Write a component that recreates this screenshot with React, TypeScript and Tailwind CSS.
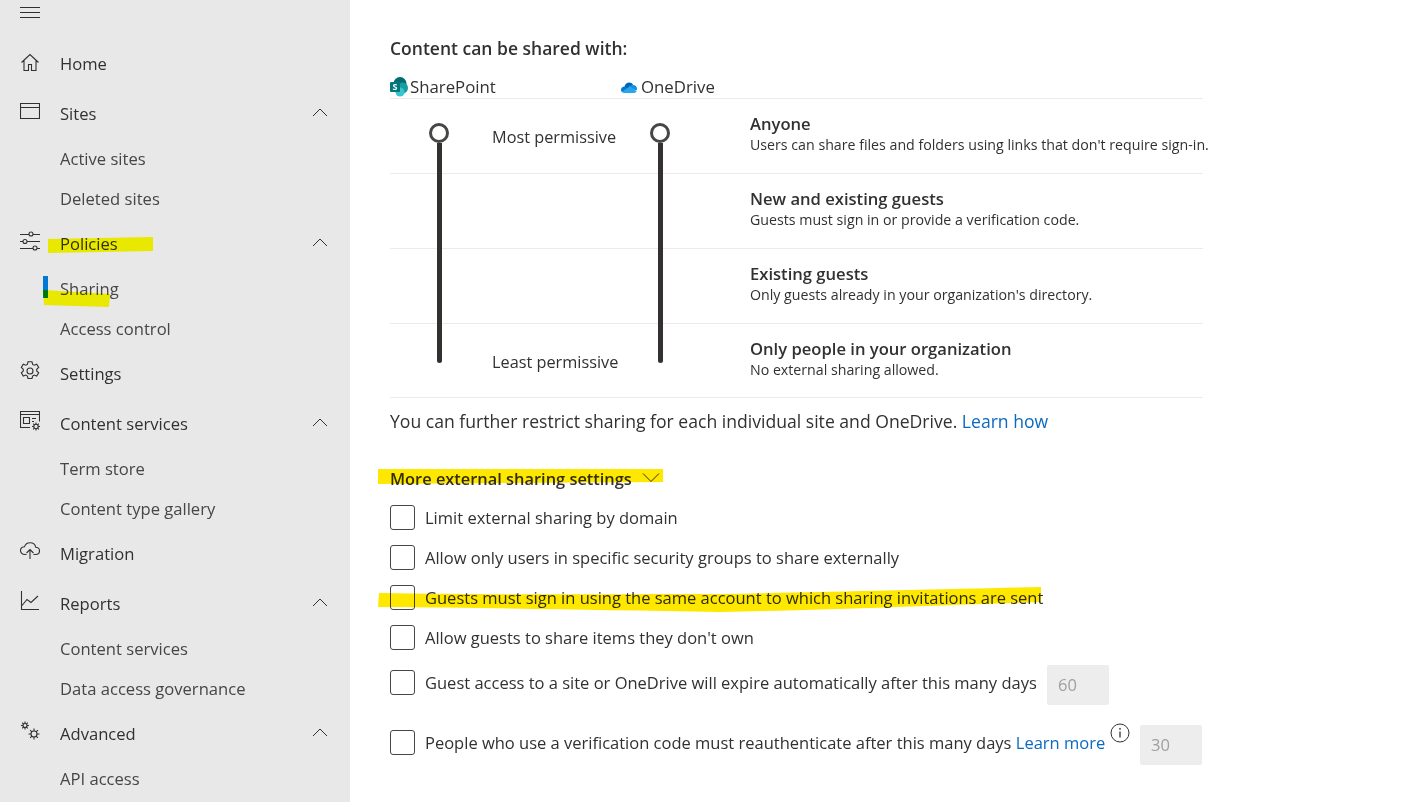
import React from 'react';

const FONT = "font-['Open_Sans','Noto_Sans',sans-serif]";

const icon = { width: 20, height: 20, viewBox: '0 0 20 20', fill: 'none', stroke: '#323130', strokeWidth: 1.1 };

const HomeIcon = () => (
  <svg {...icon}>
    <path d="M1.5 11.5 10 3.5l8.5 8M4 9.5v10h4.5v-6h3v6H16v-10" />
  </svg>
);
const SitesIcon = () => (
  <svg {...icon}>
    <path d="M.5 2.5h19v15H.5zM.5 6.5h19" />
  </svg>
);
const PoliciesIcon = () => (
  <svg {...icon}>
    <path d="M0 3.5h9M13 3.5h7M0 10.5h3M7 10.5h13M0 17.5h13M17 17.5h3" />
    <circle cx="11" cy="3" r="2" />
    <circle cx="5" cy="10.5" r="2" />
    <circle cx="15" cy="17" r="2" />
  </svg>
);
const GearIcon = () => (
  <svg {...icon}>
    <path d="M8 .8h4l.6 2.6 1.6.8 2.5-1 2 3.3-2 1.8v1.6l2 1.9-2 3.3-2.5-1-1.6.9-.6 2.5H8l-.6-2.5-1.6-.9-2.5 1-2-3.3 2-1.9V8.3l-2-1.8 2-3.3 2.5 1 1.6-.8z" />
    <circle cx="10" cy="10" r="3" />
  </svg>
);
const ContentIcon = () => (
  <svg {...icon}>
    <path d="M10 16.5H.5V.5h19v10M.5 3.5h19M3.5 6.5h6v6h-6zM12 7.5h4M12 10.5h2" />
    <circle cx="16" cy="15.5" r="2.2" />
    <path d="M16 11.5v1.8M16 17.7v1.8M12 15.5h1.8M18.2 15.5H20M13.2 12.7l1.2 1.2M17.6 17.1l1.2 1.2M13.2 18.3l1.2-1.2M17.6 13.9l1.2-1.2" />
  </svg>
);
const MigrationIcon = () => (
  <svg {...icon}>
    <path d="M6.5 13.5H4.8C2.4 13.5.5 11.8.5 9.6s1.7-3.8 4-3.9C5.3 3.3 7.5 1.8 10 1.8c3 0 5.3 1.8 5.7 4.4 2.2.1 3.8 1.7 3.8 3.7s-1.7 3.6-4 3.6h-2" />
    <path d="M10 18V9M6.5 12 10 8.5l3.5 3.5" />
  </svg>
);
const ReportsIcon = () => (
  <svg {...icon}>
    <path d="M1.5 0v18.5H19M2 14.5l5-6 4 3 7-6.5" />
  </svg>
);
const AdvancedIcon = () => (
  <svg {...icon}>
    <circle cx="5" cy="4.5" r="2" />
    <path d="M5 .5v2M5 6.5v2M1 4.5h2M7 4.5h2M2.2 1.7l1.4 1.4M6.4 5.9l1.4 1.4M2.2 7.3l1.4-1.4M6.4 3.1l1.4-1.4" />
    <circle cx="14" cy="13" r="3" />
    <path d="M14 7.5V10M14 16v2.5M8.5 13H11M17 13h2.5M10.1 9.1l1.8 1.8M16.1 15.1l1.8 1.8M10.1 16.9l1.8-1.8M16.1 10.9l1.8-1.8" />
  </svg>
);

const Chevron = ({ down }: { down?: boolean }) => (
  <svg width="18" height="9" viewBox="0 0 18 9" fill="none" stroke="#323130" strokeWidth="1">
    <path d={down ? 'M1 .5l8 8 8-8' : 'M2 8l7-7 7 7'} />
  </svg>
);

function NavItem({ label, Icon, open }: { label: string; Icon: () => React.ReactElement; open?: boolean }) {
  return (
    <div className="h-10 my-[5px] flex items-center pl-5 pr-[21px] shrink-0">
      <span className="w-10 mb-1 flex"><Icon /></span>
      <span className="flex-1 text-[#323130] pt-[2px]">{label}</span>
      {open && <span className="flex mb-[2px]"><Chevron /></span>}
    </div>
  );
}

function SubItem({ label, active }: { label: string; active?: boolean }) {
  return (
    <div className="relative h-10 flex items-center pl-[60px] pt-[2px] shrink-0 text-[#484644]">
      {active && <span className="absolute left-[43px] top-2 w-[5px] h-[22px] bg-[#0078d4]" />}
      {label}
    </div>
  );
}

function Sidebar() {
  return (
    <aside className="w-[350px] h-[802px] overflow-hidden bg-[#e8e8e8] shrink-0 text-[16.6px] flex flex-col">
      <div className="h-[38px] pl-5 pt-[7px] flex flex-col gap-1 shrink-0">
        <span className="w-5 h-px bg-[#323130]" />
        <span className="w-5 h-px bg-[#323130]" />
        <span className="w-5 h-px bg-[#323130]" />
      </div>
      <NavItem label="Home" Icon={HomeIcon} />
      <NavItem label="Sites" Icon={SitesIcon} open />
      <SubItem label="Active sites" />
      <SubItem label="Deleted sites" />
      <NavItem label="Policies" Icon={PoliciesIcon} open />
      <SubItem label="Sharing" active />
      <SubItem label="Access control" />
      <NavItem label="Settings" Icon={GearIcon} />
      <NavItem label="Content services" Icon={ContentIcon} open />
      <SubItem label="Term store" />
      <SubItem label="Content type gallery" />
      <NavItem label="Migration" Icon={MigrationIcon} />
      <NavItem label="Reports" Icon={ReportsIcon} open />
      <SubItem label="Content services" />
      <SubItem label="Data access governance" />
      <NavItem label="Advanced" Icon={AdvancedIcon} open />
      <SubItem label="API access" />
    </aside>
  );
}

const SharePointLogo = () => (
  <svg width="18" height="20" viewBox="0 0 18 20">
    <circle cx="10" cy="6.5" r="6.5" fill="#036c70" />
    <circle cx="12.5" cy="11" r="5.5" fill="#1a9ba1" />
    <circle cx="10" cy="15" r="4.5" fill="#37c6d0" />
    <rect x="0" y="5" width="10" height="10" rx="1" fill="#03787c" />
    <text x="5" y="13" textAnchor="middle" fontSize="9" fontWeight="700" fill="#fff" fontFamily="Open Sans, sans-serif">S</text>
  </svg>
);

const OneDriveLogo = () => (
  <svg width="16" height="11" viewBox="0 0 16 11">
    <path d="M6 8 3.5 4.5C4.2 2 6 .5 8.2.5c1.700 0 3 .8 3.800 2.200L9 8z" fill="#0364b8" />
    <path d="M3.500 4.500C1.500 4.600 0 6 0 7.700 0 8.500.3 9.300.8 10L6 8l1-2z" fill="#0078d4" />
    <path d="M12 3c2.300 0 4 1.700 4 3.700 0 .6-.1 1.100-.4 1.600L10 7 7 5.500 9.500 3.600C10.300 3.200 11.100 3 12 3z" fill="#1490df" />
    <path d="M.8 10c.6.600 1.400 1 2.400 1H13c1.100 0 2.100-.6 2.600-1.700C14 7.500 11 5.500 8.500 4.700 6 6 3 8.500.8 10z" fill="#28a8ea" />
  </svg>
);

const LEVELS = [
  { title: 'Anyone', desc: "Users can share files and folders using links that don't require sign-in.", left: 'Most permissive' },
  { title: 'New and existing guests', desc: 'Guests must sign in or provide a verification code.' },
  { title: 'Existing guests', desc: "Only guests already in your organization's directory." },
  { title: 'Only people in your organization', desc: 'No external sharing allowed.', left: 'Least permissive' },
];

function SliderTrack({ className }: { className: string }) {
  return (
    <div className={`absolute top-[47px] flex flex-col items-center ${className}`}>
      <span className="w-5 h-5 rounded-full border-[3px] border-[#484644] bg-white" />
      <span className="w-[5px] h-[220px] bg-[#323130] rounded-b-full" />
    </div>
  );
}

function LevelRow({ title, desc, left, last }: { title: string; desc: string; left?: string; last?: boolean }) {
  return (
    <div className={`flex border-b border-[#edebe9] ${last ? 'h-[74px]' : 'h-[75px]'}`}>
      <div className="w-[360px] pl-[102px] shrink-0">
        {left && <div className="text-[16.3px] leading-6 mt-[26px]">{left}</div>}
      </div>
      <div className="pt-[14px] whitespace-nowrap">
        <div className="text-[16.6px] leading-[22px] font-semibold">{title}</div>
        <div className="text-[14.2px] leading-[20px]">{desc}</div>
      </div>
    </div>
  );
}

function Check({ children, className = '' }: { children: React.ReactNode; className?: string }) {
  return (
    <div className={`h-10 flex items-center ${className}`}>
      <span className="w-[25px] h-[25px] mb-[2px] border border-[#484644] rounded-[3px] shrink-0" />
      <span className="ml-[10px] pt-px whitespace-nowrap">{children}</span>
    </div>
  );
}

const NumberBox = ({ value, className = '' }: { value: string; className?: string }) => (
  <span className={`w-[62px] h-10 mt-1 bg-[#ededed] rounded-[2px] flex items-center pl-[11px] text-[#a19f9d] shrink-0 ${className}`}>{value}</span>
);

const InfoIcon = () => (
  <svg width="20" height="20" viewBox="0 0 20 20" fill="none" stroke="#323130" className="mb-5 shrink-0">
    <circle cx="10" cy="10" r="9" />
    <path d="M10 8.5v6" strokeWidth="1.3" />
    <circle cx="10" cy="5.8" r=".9" fill="#323130" stroke="none" />
  </svg>
);

function Main() {
  return (
    <main className="flex-1 pl-10 pt-9 text-[16.5px] text-[#323130]">
      <div className="w-[813px]">
        <h2 className="h-6 leading-6 font-semibold text-[17.5px]">Content can be shared with:</h2>
        <div className="relative text-[16.8px]">
          <div className="mt-4 h-[23px] flex border-b border-[#edebe9]">
            <div className="w-[231px] flex items-center gap-[2px]"><SharePointLogo /><span>SharePoint</span></div>
            <div className="flex items-center gap-1"><OneDriveLogo /><span>OneDrive</span></div>
          </div>
          {LEVELS.map((l, i) => (
            <LevelRow key={l.title} {...l} last={i === LEVELS.length - 1} />
          ))}
          <SliderTrack className="left-[39px]" />
          <SliderTrack className="left-[260px]" />
        </div>
      </div>
      <p className="mt-[11px] h-6 leading-6 whitespace-nowrap text-[17.6px]">
        You can further restrict sharing for each individual site and OneDrive. <a className="text-[#0b6abf]">Learn how</a>
      </p>
      <div className="mt-[34px] h-6 flex items-center font-semibold text-[16.4px] pt-px">
        More external sharing settings
        <span className="ml-[10px] mb-1 flex"><Chevron down /></span>
      </div>
      <div className="mt-[7px] flex flex-col">
        <Check>Limit external sharing by domain</Check>
        <Check>Allow only users in specific security groups to share externally</Check>
        <Check>Guests must sign in using the same account to which sharing invitations are sent</Check>
        <Check>Allow guests to share items they don't own</Check>
        <div className="mt-[5px] flex items-center h-10">
          <Check className="w-[657px]">Guest access to a site or OneDrive will expire automatically after this many days</Check>
          <NumberBox value="60" />
        </div>
        <div className="mt-5 flex items-center h-10">
          <Check className="w-[720px]">
            People who use a verification code must reauthenticate after this many days <a className="text-[#0b6abf]">Learn more</a>
          </Check>
          <InfoIcon />
          <NumberBox value="30" className="ml-[10px]" />
        </div>
      </div>
    </main>
  );
}

export default function App() {
  return (
    <div className={`relative w-[1413px] h-[802px] overflow-hidden bg-white flex ${FONT}`}>
      <Sidebar />
      <Main />
      {/* marker strokes drawn over the screenshot */}
      <svg className="absolute inset-0 pointer-events-none mix-blend-multiply" width="1413" height="802">
        <path d="M48 239 153 237 153 251 48 253z" fill="#ffff00" />
        <path d="M43 290 110 294 109 307 44 305z" fill="#ffff00" />
        <path d="M378 469 663 469 663 482 378 484z" fill="#ffe800" />
        <path d="M379 593C500 595 600 594 720 594 830 592 950 589 1041 587L1041 602C950 605 830 610 720 612 600 610 500 608 378 607z" fill="#ffe800" />
      </svg>
    </div>
  );
}
